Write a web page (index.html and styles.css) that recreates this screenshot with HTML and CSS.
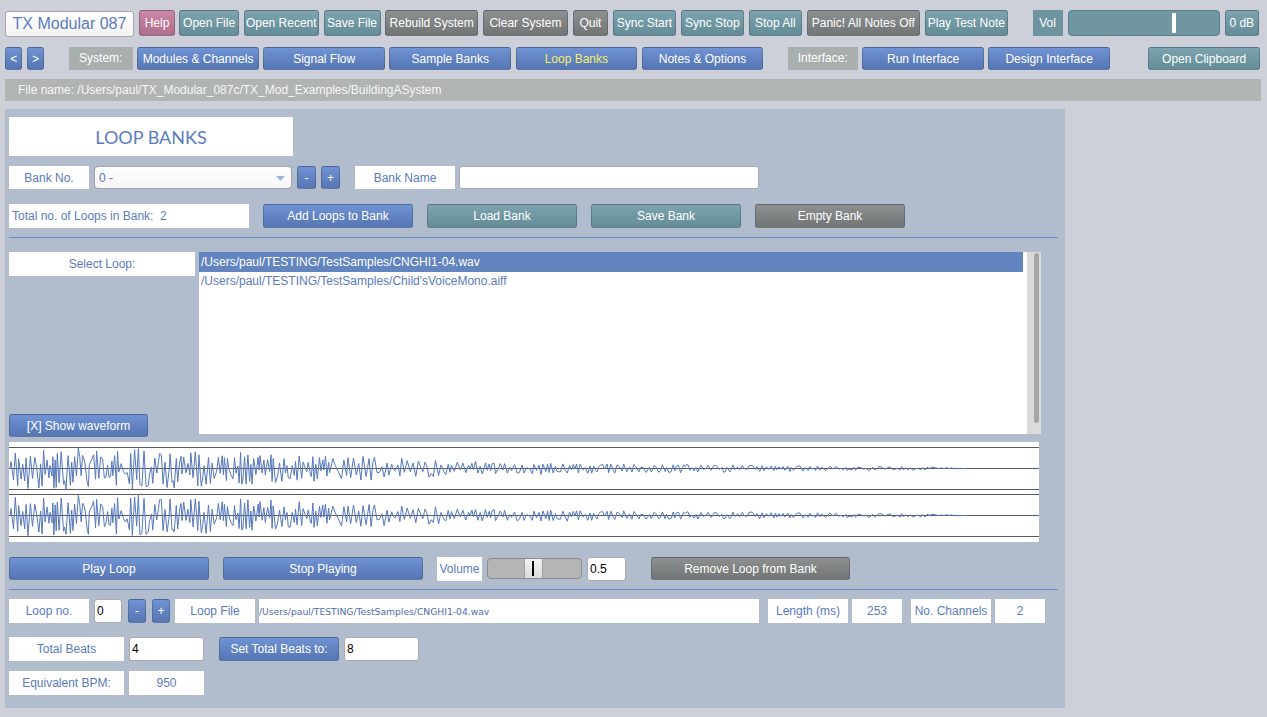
FILE: index.html
```html
<!DOCTYPE html>
<html lang="en">
<head>
<meta charset="utf-8">
<title>TX Modular 087 - Loop Banks</title>
<link rel="stylesheet" href="styles.css">
</head>
<body>
<div class="app">
  <div class="toolbar">
    <div class="brand">TX Modular 087</div>
    <button class="btn pink w-help">Help</button>
    <button class="btn teal w-openfile">Open File</button>
    <button class="btn teal w-recent">Open Recent</button>
    <button class="btn teal w-save">Save File</button>
    <button class="btn gray w-rebuild">Rebuild System</button>
    <button class="btn gray w-clear">Clear System</button>
    <button class="btn gray w-quit">Quit</button>
    <button class="btn teal w-sync">Sync Start</button>
    <button class="btn teal w-sync">Sync Stop</button>
    <button class="btn teal w-stop">Stop All</button>
    <button class="btn gray w-panic">Panic! All Notes Off</button>
    <button class="btn teal w-test">Play Test Note</button>
    <div class="vol-label">Vol</div>
    <div class="vol-slider"><span class="vol-thumb"></span></div>
    <button class="btn teal w-db">0 dB</button>
  </div>

  <div class="navbar">
    <button class="btn blue w-arrow">&lt;</button>
    <button class="btn blue w-arrow">&gt;</button>
    <div class="tag w-system">System:</div>
    <button class="btn blue w-nav">Modules &amp; Channels</button>
    <button class="btn blue w-nav">Signal Flow</button>
    <button class="btn blue w-nav">Sample Banks</button>
    <button class="btn blue w-nav active">Loop Banks</button>
    <button class="btn blue w-nav">Notes &amp; Options</button>
    <div class="tag w-interface">Interface:</div>
    <button class="btn blue w-nav">Run Interface</button>
    <button class="btn blue w-nav">Design Interface</button>
    <button class="btn teal w-clip">Open Clipboard</button>
  </div>

  <div class="filebar">File name: /Users/paul/TX_Modular_087c/TX_Mod_Examples/BuildingASystem</div>

  <div class="panel">
    <div class="title">LOOP BANKS</div>

    <div class="row r-bank">
      <div class="label w80">Bank No.</div>
      <div class="select">
        <span>0 -</span>
        <svg class="caret" width="9" height="5" viewBox="0 0 9 5"><path d="M0 0H9L4.5 5Z" fill="#9fb4dc"/></svg>
      </div>
      <button class="btn blue w-sq">-</button>
      <button class="btn blue w-sq">+</button>
      <div class="label w100 ml10">Bank Name</div>
      <div class="field w300 tight"></div>
    </div>

    <div class="row r-total gap14">
      <div class="label left w240">Total no. of Loops in Bank:&nbsp; 2</div>
      <button class="btn blue w150">Add Loops to Bank</button>
      <button class="btn teal w150">Load Bank</button>
      <button class="btn teal w150">Save Bank</button>
      <button class="btn gray w150">Empty Bank</button>
    </div>

    <div class="divider d1"></div>

    <div class="loops">
      <div class="loops-side">
        <div class="label w186 h24">Select Loop:</div>
        <button class="btn blue w139 h23">[X] Show waveform</button>
      </div>
      <div class="list">
        <div class="list-items">
          <div class="item sel">/Users/paul/TESTING/TestSamples/CNGHI1-04.wav</div>
          <div class="item">/Users/paul/TESTING/TestSamples/Child'sVoiceMono.aiff</div>
        </div>
        <div class="scroll"><div class="scroll-thumb"></div></div>
      </div>
    </div>

    <div class="wave">
      <svg id="wave-svg" width="1030" height="100" viewBox="0 0 1030 100">
        <g class="axis">
          <line x1="0" y1="5.5" x2="1030" y2="5.5"/>
          <line x1="0" y1="47.5" x2="1030" y2="47.5"/>
          <line x1="0" y1="52.5" x2="1030" y2="52.5"/>
          <line x1="0" y1="94.5" x2="1030" y2="94.5"/>
        </g>
        <g class="axis mid">
          <line x1="0" y1="26.5" x2="1030" y2="26.5"/>
          <line x1="0" y1="73.5" x2="1030" y2="73.5"/>
        </g>
        <g id="wave-paths"></g>
      </svg>
    </div>

    <div class="row r-play gap14">
      <button class="btn blue w200">Play Loop</button>
      <button class="btn blue w200">Stop Playing</button>
      <div class="inline-group">
        <div class="label w45 tall">Volume</div>
        <div class="hslider"><span class="hslider-thumb"></span></div>
        <div class="field w39 tall">0.5</div>
      </div>
      <button class="btn gray w199 ml11">Remove Loop from Bank</button>
    </div>

    <div class="divider d2"></div>

    <div class="row r-loop">
      <div class="label w80">Loop no.</div>
      <div class="field w28">0</div>
      <button class="btn blue w-sq2 ml1">-</button>
      <button class="btn blue w-sq2 ml1">+</button>
      <div class="label w80">Loop File</div>
      <div class="label path w500 tight">/Users/paul/TESTING/TestSamples/CNGHI1-04.wav</div>
      <div class="label w80 ml4">Length (ms)</div>
      <div class="label w50 tight">253</div>
      <div class="label w80 ml4">No. Channels</div>
      <div class="label w50 tight">2</div>
    </div>

    <div class="row r-beats">
      <div class="label w115">Total Beats</div>
      <div class="field w75">4</div>
      <button class="btn blue w120 ml10">Set Total Beats to:</button>
      <div class="field w75">8</div>
    </div>

    <div class="row r-bpm">
      <div class="label w115">Equivalent BPM:</div>
      <div class="label w75">950</div>
    </div>
  </div>
</div>
<script src="script.js"></script>
</body>
</html>
```

FILE: styles.css
```css
* { box-sizing: border-box; }
html, body { margin: 0; padding: 0; }
body {
  background: #cdd0d9;
  font-family: "Liberation Sans", Arial, Helvetica, sans-serif;
  font-size: 12px;
  color: #5b7bbd;
}
.app { padding: 10px 0 0 5px; width: 1267px; height: 717px; }

/* buttons */
.btn {
  font-family: "Liberation Sans", Arial, Helvetica, sans-serif;
  font-size: 12px;
  color: #fff;
  border: 1px solid rgba(60, 70, 90, 0.35);
  border-radius: 3px;
  padding: 0;
  margin: 0;
  white-space: nowrap;
  text-align: center;
  flex: none;
  cursor: default;
}
.blue { background: linear-gradient(#6f93d3, #5675b3); }
.teal { background: linear-gradient(#7ca3ae, #648d98); }
.gray { background: linear-gradient(#8d9090, #717575); }
.pink { background: linear-gradient(#ca86a3, #b16e8c); }
.active { color: #f3f06a; }

/* toolbar */
.toolbar { display: flex; height: 26px; gap: 4.6px; }
.toolbar .btn { height: 26px; }
.brand {
  width: 129px;
  height: 26px;
  margin-top: 1px;
  background: linear-gradient(#ffffff, #f4f4f4);
  border: 1px solid #a3a6ab;
  border-radius: 3px;
  color: #5b7cc0;
  font-size: 16px;
  line-height: 24px;
  text-align: center;
  margin-right: 0.7px;
}
.w-help { width: 35.4px; }
.w-openfile { width: 59.7px; }
.w-recent { width: 75.4px; }
.w-save { width: 57px; }
.w-rebuild { width: 93px; }
.w-clear { width: 85.4px; }
.w-quit { width: 35.4px; }
.w-sync { width: 63.4px; }
.w-stop { width: 53.4px; }
.w-panic { width: 113.4px; }
.w-test { width: 83.4px; }
.vol-label {
  width: 30px;
  margin-left: 20px;
  background: #6d949f;
  color: #fff;
  line-height: 26px;
  text-align: center;
}
.vol-slider {
  position: relative;
  width: 152px;
  margin-left: 0.4px;
  background: #6f96a1;
  border: 1px solid #5b818b;
  border-radius: 4px;
}
.vol-thumb {
  position: absolute;
  left: 103px;
  top: 2px;
  width: 4px;
  height: 20px;
  background: #fff;
  border-radius: 1px;
}
.w-db { width: 33.7px; margin-left: 0.7px; }

/* navbar */
.navbar { display: flex; height: 23px; margin-top: 11px; gap: 4.5px; }
.navbar .btn { height: 23px; }
.w-arrow { width: 17.4px; font-size: 12px; }
.tag {
  background: #a9aeae;
  color: #fff;
  line-height: 23px;
  text-align: center;
}
.w-system { width: 64px; margin-left: 20px; }
.w-interface { width: 70px; margin-left: 20px; }
.w-nav { width: 121.6px; }
.w-clip { width: 111.4px; margin-left: 34px; }

/* file bar */
.filebar {
  margin-top: 9px;
  width: 1256px;
  height: 22px;
  line-height: 22px;
  padding-left: 13px;
  background: #b0b5b3;
  color: #f6f7f7;
}

/* panel */
.panel {
  margin-top: 8px;
  width: 1060px;
  height: 599px;
  background: #b1bccd;
  padding: 8px 0 0 4px;
}
.title {
  width: 284px;
  height: 39px;
  background: #fff;
  color: #5b7cc0;
  font-family: "Lato", "Open Sans", sans-serif;
  font-size: 18px;
  line-height: 40px;
  text-align: center;
}
.row { display: flex; gap: 5px; align-items: stretch; }
.gap14 { gap: 14px; }
.r-bank { margin-top: 10px; height: 23px; }
.r-total { margin-top: 15px; height: 24px; }
.r-play { margin-top: 15px; height: 23px; align-items: center; }
.r-loop { margin-top: 9px; height: 24px; }
.r-beats { margin-top: 14px; height: 24px; }
.r-bpm { margin-top: 10px; height: 24px; }

.label {
  background: #fff;
  color: #5b7bbd;
  text-align: center;
  display: flex;
  align-items: center;
  justify-content: center;
  white-space: nowrap;
  flex: none;
}
.label.left { justify-content: flex-start; padding-left: 3px; }
.field {
  background: #fff;
  border: 1px solid #a9abb0;
  border-radius: 3px;
  color: #000;
  display: flex;
  align-items: center;
  padding-left: 2px;
  flex: none;
}
.select {
  width: 198px;
  background: linear-gradient(#ffffff, #f6f6f6);
  border: 1px solid #a0a3a8;
  border-radius: 4px;
  color: #5673b3;
  display: flex;
  align-items: center;
  justify-content: space-between;
  padding: 0 6px 0 4px;
  flex: none;
}
.caret { display: block; margin-top: 1px; }

.w-sq { width: 19px; height: 23px; }
.w-sq2 { width: 18px; height: 24px; }
.w28 { width: 28px; }
.w39 { width: 39px; }
.w45 { width: 45px; }
.w50 { width: 50px; }
.w75 { width: 75px; }
.w80 { width: 80px; }
.w100 { width: 100px; }
.w115 { width: 115px; }
.w120 { width: 120px; }
.w139 { width: 139px; }
.w150 { width: 150px; }
.w186 { width: 186px; }
.w199 { width: 199px; }
.w200 { width: 200px; }
.w240 { width: 240px; }
.w300 { width: 300px; }
.w500 { width: 500px; }
.h23 { height: 23px; }
.h24 { height: 24px; }
.tall { height: 24px; }
.ml1 { margin-left: 1px; }
.ml4 { margin-left: 4px; }
.ml10 { margin-left: 10px; }
.ml11 { margin-left: 11px; }
.tight { margin-left: -1px; }
.r-play .btn { height: 23px; }

.path {
  justify-content: flex-start;
  padding-left: 0;
  font-family: "DejaVu Sans", "Liberation Sans", sans-serif;
  font-size: 9.2px;
  color: #4d6cab;
}

.divider { width: 1049px; height: 1px; background: #6b8bc8; }
.d1 { margin-top: 9px; }
.d2 { margin-top: 9px; }

/* loops list */
.loops { display: flex; gap: 4px; margin-top: 14px; height: 185px; }
.loops-side {
  display: flex;
  flex-direction: column;
  justify-content: space-between;
  align-items: flex-start;
  width: 186px;
}
.list { display: flex; width: 842px; height: 182px; }
.list-items { flex: 1; background: #fff; padding-right: 4px; }
.item {
  height: 20px;
  line-height: 20px;
  padding-left: 2px;
  color: #5b7bbd;
  white-space: nowrap;
}
.item + .item { line-height: 18px; }
.item.sel { background: #6284bf; color: #fff; }
.scroll { width: 14px; background: #dbdbdb; padding: 1px 0 0 7px; }
.scroll-thumb { width: 5px; height: 170px; background: #a6a6a6; border-radius: 3px; }

/* waveform */
.wave { margin-top: 5px; width: 1030px; height: 100px; background: #fff; }
.wave svg { display: block; }
.axis line { stroke: #5a5a5a; stroke-width: 1; }
.wave-line { fill: none; stroke: #5577bb; stroke-width: 1; stroke-linejoin: miter; }

/* volume slider */
.inline-group { display: flex; gap: 5px; align-items: center; height: 24px; }
.hslider {
  position: relative;
  width: 95px;
  height: 21px;
  background: #b5b5b5;
  border: 1px solid #8c8c8c;
  border-radius: 4px;
}
.hslider-thumb {
  position: absolute;
  left: 36px;
  top: 0;
  width: 19px;
  height: 19px;
  background: linear-gradient(#f2f2f2, #dcdcdc);
  border-left: 1px solid #a0a0a0;
  border-right: 1px solid #a0a0a0;
}
.hslider-thumb::after {
  content: "";
  position: absolute;
  left: 7px;
  top: 2px;
  width: 2px;
  height: 15px;
  background: #000;
}
```

FILE: script.js
```js
(function () {
  var ns = "http://www.w3.org/2000/svg";
  var group = document.getElementById("wave-paths");
  var env = [[0, 19], [60, 20], [150, 18], [230, 15], [320, 12], [400, 9], [470, 6.5], [600, 4.5], [700, 3.5], [820, 2.4], [900, 1.7], [940, 0.9], [955, 0]];
  function amp(x) {
    for (var i = 1; i < env.length; i++) {
      if (x <= env[i][0]) {
        var a = env[i - 1], b = env[i];
        return a[1] + (b[1] - a[1]) * (x - a[0]) / (b[0] - a[0]);
      }
    }
    return 0;
  }
  [26.5, 73.5].forEach(function (cy, ch) {
    var seed = 4242;
    var seed2 = 777 + ch * 31;
    function rnd() { seed = (seed * 16807) % 2147483647; return (seed - 1) / 2147483646; }
    function rnd2() { seed2 = (seed2 * 48271) % 2147483647; return (seed2 - 1) / 2147483646; }
    var x = 1, s = 1;
    var d = "M1 " + cy;
    while (x < 955) {
      var dense = x < 320 ? 1 : 0;
      x += (dense ? 0.9 : 1.3) + rnd() * (dense ? 1.6 : 2.0);
      s = -s;
      if (rnd() < 0.18) s = -s;
      var r = 0.05 + 0.95 * Math.pow(rnd(), 0.75);
      if (rnd() < 0.12) r = 1;
      var a = amp(x) * r * (0.88 + rnd2() * 0.24);
      d += "L" + x.toFixed(1) + " " + (cy + s * a).toFixed(1);
    }
    var p = document.createElementNS(ns, "path");
    p.setAttribute("d", d);
    p.setAttribute("class", "wave-line");
    group.appendChild(p);
  });
})();
```
